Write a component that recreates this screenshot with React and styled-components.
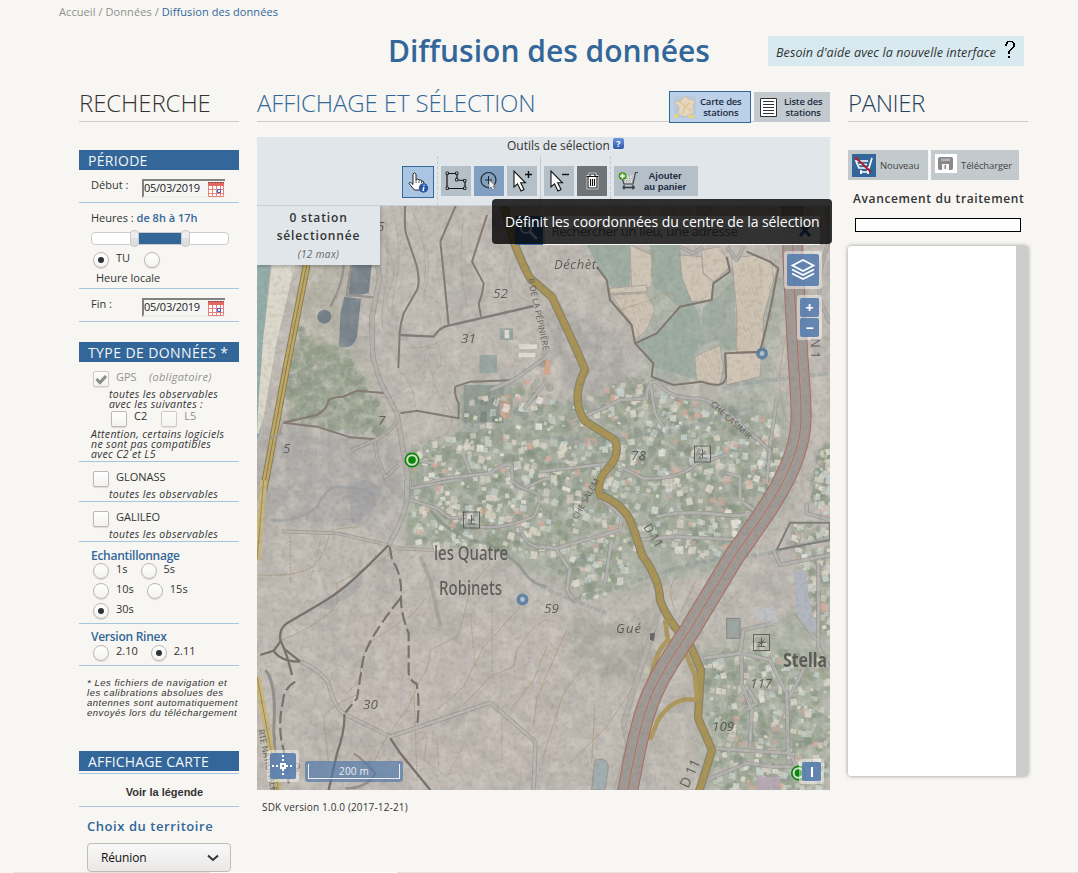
import React from 'react';
import styled, { createGlobalStyle, css } from 'styled-components';

const blue = '#336699';

const Global = createGlobalStyle`
  * { box-sizing: border-box; }
  body { margin: 0; background: #f7f6f2; font-family: "Open Sans", "Noto Sans", sans-serif; color: #333; overflow: hidden; }
  h1, h2, h3, p { margin: 0; font-weight: 400; }
  button { font-family: inherit; border: 0; padding: 0; margin: 0; }
`;

const Page = styled.div`width: 1078px; height: 873px; overflow: hidden; display: flex; flex-direction: column;`;
const Breadcrumb = styled.nav`
  height: 24px; padding: 4px 0 0 59px; font-size: 11px; line-height: 16px; color: #909090; white-space: pre; letter-spacing: .08px;
  b { font-weight: 400; color: ${blue}; }
`;
const TitleRow = styled.header`height: 61px; display: flex; padding-left: 388px; align-items: flex-start; flex: none;`;
const Title = styled.h1`width: 380px; font-size: 30px; line-height: 40px; padding-top: 7px; font-weight: 600; color: ${blue}; white-space: nowrap;`;
const Help = styled.div`
  width: 256px; height: 30px; margin-top: 12px; padding: 0 8px; background: #d8eaef; display: flex; align-items: center;
  justify-content: space-between; font-size: 12.5px; letter-spacing: .1px; font-style: italic; white-space: nowrap; padding-top: 2px;
  svg { margin-bottom: 4px; }
`;
const Columns = styled.main`display: grid; grid-template-columns: 160px 573px 180px; column-gap: 18px; padding-left: 79px; height: 788px; flex: none;`;
const Column = styled.section`display: flex; flex-direction: column; min-width: 0;`;
const Head = styled.div`height: 37px; border-bottom: 1px solid #ccc; display: flex; flex: none; align-items: flex-start; justify-content: space-between;`;
const Heading = styled.h2`font-size: 24px; line-height: 35px; font-weight: 300; white-space: nowrap; letter-spacing: ${p => p.$ls || 0}px; color: ${p => p.$c || '#333'};`;

/* search column */
const Bar = styled.h3`
  height: 20px; flex: none; margin-top: ${p => p.$mt}px; padding-left: 9px; background: ${blue}; color: #f4f6f8;
  font-size: 14px; line-height: 21px; letter-spacing: ${p => p.$ls || 0}px; white-space: nowrap;
`;
const Group = styled.div`
  height: ${p => p.$h}px; flex: none; border-bottom: 1px solid ${p => p.$line || '#a9c4de'}; padding: ${p => p.$pt || 0}px 0 0 12px;
  display: flex; flex-direction: column; font-size: 11px; white-space: nowrap;
`;
const Line = styled.div`display: flex; height: ${p => p.$h || 20}px; flex: none; line-height: ${p => p.$lh || 14}px; padding-left: ${p => p.$pl || 0}px; color: ${p => (p.$dim ? '#929292' : 'inherit')};`;
const Label = styled.span`margin-left: ${p => p.$ml || 0}px; width: ${p => (p.$w ? p.$w + 'px' : 'auto')}; font-style: ${p => (p.$i ? 'italic' : 'normal')}; letter-spacing: ${p => p.$ls || 0}px;`;
const Small = styled.p`font-size: 10.5px; line-height: 10px; margin-top: ${p => p.$mt ?? -1}px; font-style: italic; padding-left: ${p => p.$pl || 0}px; letter-spacing: ${p => p.$ls ?? 0.34}px;`;
const Sub = styled.h3`font-size: 12px; font-weight: 600; color: ${blue}; line-height: 14px; height: 14px; letter-spacing: ${p => p.$ls ?? -0.27}px;`;
const Hours = styled.span`font-weight: 600; color: ${blue};`;
const DateField = styled.div`
  width: 83px; height: 19px; display: flex; align-items: center; justify-content: space-between; border: 2px solid; border-color: #828282 transparent #eee #828282; border-right-width: 0;
  background: #f5f5f4; font-size: 11px; line-height: 14px; letter-spacing: -.25px; color: #222; margin-top: ${p => p.$mt || 0}px;
  span { padding-bottom: 1px; }
`;
const control = css`
  width: 16px; height: 16px; flex: none; border: 1px solid #bdb8b1; background: linear-gradient(#fff, #f3f2f1);
  box-shadow: 0 1px 1px rgba(0,0,0,.12); display: flex; align-items: center; justify-content: center; margin-left: ${p => p.$ml || 0}px; margin-top: ${p => p.$mt ?? 2}px;
`;
const Radio = styled.i`
  ${control} border-radius: 50%;
  &::after { content: ''; display: ${p => (p.$on ? 'block' : 'none')}; width: 6px; height: 6px; border-radius: 50%; background: #2e3436; }
`;
const Check = styled.i`${control} border-radius: 2px; opacity: ${p => (p.$off ? 0.7 : 1)};`;
const Slider = styled.div`
  width: 138px; height: 13px; margin: 7px 0 6px; flex: none; border: 1px solid #ccc; border-radius: 4px; background: #fff; display: flex; align-items: center; padding-left: 38px;
`;
const Range = styled.span`width: 42px; height: 11px; background: ${blue};`;
const Handle = styled.span`width: 9px; height: 17px; flex: none; border: 1px solid #c8c8c8; border-radius: 4px; background: linear-gradient(#ededed 50%, #dedede 50%);`;
const Note = styled.p`
  margin: 12px 0 0 8px; height: 40px; flex: none; font: italic 9.5px/10px "Liberation Sans", sans-serif; letter-spacing: .52px; white-space: nowrap;
`;
const Legend = styled.div`
  margin-top: 2px; height: 34px; flex: none; border: 1px solid #a9c4de; border-width: 1px 0; text-align: center;
  font: bold 11px/37px "Liberation Sans", sans-serif; padding-left: 11px; color: #333;
`;
const Territory = styled.h3`margin: 11px 0 8px 8px; font-size: 13px; line-height: 17px; height: 17px; font-weight: 600; color: ${blue}; letter-spacing: .56px; flex: none; white-space: nowrap;`;
const Select = styled.div`
  width: 144px; height: 29px; margin-left: 8px; flex: none; border: 1px solid #c0bdb9; border-radius: 4px; background: linear-gradient(#f9f8f8, #e9e8e7);
  display: flex; align-items: center; justify-content: space-between; padding: 0 11px 0 13px; font-size: 12px; letter-spacing: -.15px; color: #111;
`;
const Footer = styled.div`height: 1px; flex: none; margin-top: -1px; margin-left: 14px; border-left: 196px solid #e4e3dc; border-right: 681px solid #e4e3dc; background: #fff;`;

/* map column */
const MapColumn = styled(Column)`position: relative;`;
const Views = styled.div`display: flex; gap: 3px; margin-top: 6px;`;
const View = styled.button`
  width: ${p => p.$w}px; height: ${p => (p.$on ? 32 : 30)}px; margin-top: ${p => (p.$on ? 0 : 1)}px; display: flex; align-items: center; gap: ${p => p.$gap}px; padding-left: 4px;
  background: ${p => (p.$on ? '#bcd0e7' : '#c2cacf')}; border: ${p => (p.$on ? '1px solid #336699' : '0')}; font-size: 9.5px; line-height: 11px; font-weight: 600; color: #1c2c42; text-align: center; letter-spacing: -.2px;
`;
const Tools = styled.div`margin-top: 15px; height: 69px; flex: none; background: #e0e6e9; border-bottom: 1px solid #c9cfd5; display: flex; flex-direction: column;`;
const ToolsTitle = styled.div`height: 19px; padding: 0 0 0 250px; display: flex; gap: 3px; font-size: 12px; line-height: 17px; white-space: nowrap;`;
const Badge = styled.span`width: 11px; height: 11px; margin-top: 1px; background: linear-gradient(#6f96dc, #2c57ae); color: #fff; font-size: 9px; font-weight: 700; line-height: 11px; text-align: center; border-radius: 2px;`;
const ToolRow = styled.div`display: flex; height: 49px; padding-left: 145px; align-items: flex-start;`;
const Tool = styled.button`
  width: ${p => p.$w || 30}px; height: ${p => p.$h || 30}px; flex: none; margin: ${p => p.$mt ?? 10}px 0 0 ${p => p.$ml ?? 3}px; background: ${p => p.$bg || '#b4bfc8'};
  border: ${p => (p.$on ? '1px solid #336699' : '0')}; display: flex; align-items: center; justify-content: ${p => (p.$start ? 'flex-start' : 'center')}; gap: 5px; padding-left: ${p => (p.$start ? 4 : 0)}px;
  font: 700 9.5px/11px "Liberation Sans", sans-serif; color: #1c2c42; svg { flex: none; }
`;
const Divider = styled.i`width: 1px; height: 49px; margin-left: 3px; border-left: 1px ${p => p.$s || 'dashed'} #c6cbd0; flex: none;`;
const Map = styled.div`height: 584px; flex: none; position: relative; overflow: hidden; background: #b7b0a8;`;
const MapSvg = styled.svg`display: block; width: 573px; height: 584px;`;
const Count = styled.div`
  position: absolute; left: 0; top: 0; width: 123px; height: 59px; background: #e0e6e9; box-shadow: 1px 2px 3px rgba(0,0,0,.2); text-align: center; font-size: 12px; font-weight: 600;
  line-height: 18px; padding-top: 3px; letter-spacing: .85px;
  em { display: block; font-weight: 400; font-size: 10px; line-height: 18px; letter-spacing: .4px; color: #666; }
`;
const Search = styled.div`
  position: absolute; left: 258px; top: 10px; width: 305px; height: 29px; display: flex; align-items: center; background: rgba(255,255,255,.9); font-size: 13px; color: #777; justify-content: space-between; padding-right: 8px;
`;
const SearchIcon = styled.span`width: 30px; height: 29px; background: #3a6ea8; border-right: 2px solid #ddd; display: flex; align-items: center; justify-content: center;`;
const Widget = styled.div`
  position: absolute; left: ${p => p.$x}px; top: ${p => p.$y}px; padding: 3px; background: rgba(255,255,255,.45); border-radius: 3px; display: flex; flex-direction: column; gap: 1px;
`;
const Key = styled.span`width: ${p => p.$w}px; height: ${p => p.$h}px; display: flex; align-items: center; justify-content: center; border-radius: 2px; background: rgba(79,119,170,.85); color: #fff; font-size: 14px; font-weight: 700;`;
const Scale = styled.div`
  position: absolute; left: 48px; top: 555px; width: 98px; height: 21px; padding: 3px; border-radius: 3px; background: rgba(79,119,170,.67);
  span { display: block; height: 15px; border: 1px solid #eee; border-top: 0; text-align: center; color: #eee; font-size: 10px; line-height: 15px; letter-spacing: .2px; }
`;
const Tip = styled.div`
  position: absolute; z-index: 5; left: 235px; top: 114px; width: 340px; height: 45px; border-radius: 4px; background: rgba(0,0,0,.8); color: #fff; font-size: 14px; line-height: 45px; padding-left: 13px; letter-spacing: -.06px; white-space: nowrap;
`;
const Sdk = styled.p`padding: 9px 0 0 5px; font-size: 10px; line-height: 16px; letter-spacing: .15px;`;

/* basket column */
const Actions = styled.div`display: flex; gap: 3px; margin-top: 28px;`;
const Action = styled.button`width: ${p => p.$w}px; height: 30px; background: #c2cacd; display: flex; align-items: flex-start; gap: 4px; padding: 4px; font-size: 9.5px; letter-spacing: -.1px; line-height: 23px; color: #444; svg { flex: none; }`;
const Progress = styled.p`margin: 9px 0 0 5px; font-size: 12px; font-weight: 600; line-height: 20px; letter-spacing: .62px; white-space: nowrap;`;
const Track = styled.div`width: 166px; height: 14px; flex: none; margin: 9px 0 14px 7px; border: 1px solid #000; background: #fff;`;
const Basket = styled.div`height: 530px; flex: none; background: #fff; border-right: 12px solid #ccc; box-shadow: 0 0 4px rgba(0,0,0,.4); border-radius: 3px;`;

function rng(seed) {
  let s = seed;
  return () => { s = (s * 1664525 + 1013904223) % 4294967296; return s / 4294967296; };
}
function inside(x, y, poly) {
  let r = false;
  for (let i = 0, j = poly.length - 1; i < poly.length; j = i++) {
    const [a, b] = poly[i], [c, d] = poly[j];
    if (b > y !== d > y && x < ((c - a) * (y - b)) / (d - b) + a) r = !r;
  }
  return r;
}
const towns = [
  { n: 760, p: [[408, 452], [440, 436], [478, 432], [530, 418], [560, 402], [640, 375], [662, 390], [712, 405], [775, 418], [783, 470], [752, 538], [700, 558], [640, 545], [608, 592], [585, 600], [545, 560], [482, 546], [410, 544]] },
  { n: 210, p: [[702, 660], [760, 640], [828, 660], [830, 790], [712, 790], [715, 740], [705, 715]] },
  { n: 70, p: [[790, 525], [830, 520], [830, 640], [805, 610]] },
  { n: 60, p: [[818, 450], [830, 445], [830, 520], [812, 500]] },
  { n: 30, p: [[460, 395], [515, 390], [545, 350], [556, 420], [465, 426]] },
];
const rnd = rng(77);
const scatter = (n, p, f) => {
  const xs = p.map(q => q[0]), ys = p.map(q => q[1]);
  const x0 = Math.min(...xs), x1 = Math.max(...xs), y0 = Math.min(...ys), y1 = Math.max(...ys);
  const out = [];
  let k = 0;
  while (out.length < n && k++ < 20000) {
    const x = x0 + rnd() * (x1 - x0), y = y0 + rnd() * (y1 - y0);
    if (inside(x, y, p)) out.push(f(x, y, out.length));
  }
  return out;
};
const roofs = ['#e0dccd', '#e5e2d6', '#ced5ca', '#c6d4cd', '#dfd6c6', '#d6cfc0', '#d3a593', '#bdceca', '#e9e6dd'];
const greens = ['#75896f', '#84957b', '#828e76', '#6c8070', '#93a187'];
const trees = towns.flatMap((t, a) => scatter(Math.round(t.n * 2), t.p, (x, y, i) => <circle key={a + 't' + i} cx={x} cy={y} r={1.5 + rnd() * 3.5} fill={greens[(rnd() * 5) | 0]} opacity=".38" />));
const houses = towns.flatMap((t, a) => scatter(t.n, t.p, (x, y, i) => {
  const s = 2.4 + rnd() * 4.4;
  return <rect key={a + 'h' + i} x={x} y={y} width={s} height={s * (0.7 + rnd() * 0.6)} fill={roofs[(rnd() * 9) | 0]} opacity={0.55 + rnd() * 0.45} transform={`rotate(${rnd() * 40 - 15} ${x} ${y})`} />;
}));
const wood = scatter(480, [[300, 320], [318, 345], [345, 345], [370, 390], [390, 435], [350, 435], [290, 420], [283, 395]], (x, y, i) => <circle key={i} cx={x} cy={y} r={1 + rnd() * 4} fill={greens[(rnd() * 5) | 0]} opacity=".33" />);

const Road = ({ d, w = 8, c = '#b1b0ac', e = '#83827f' }) => (
  <g fill="none" strokeLinejoin="round"><path d={d} stroke={e} strokeWidth={w + 4} opacity=".75" /><path d={d} stroke={c} strokeWidth={w} /></g>
);
const Pin = ({ x, y }) => <g><circle cx={x} cy={y} r="6.7" fill="#d4ddcc" stroke="#0a870a" strokeWidth="1.7" /><circle cx={x} cy={y} r="3.8" fill="#078607" /></g>;
const Dot = ({ x, y }) => <circle cx={x} cy={y} r="4.2" fill="#b4c3cf" stroke="#557aa0" strokeWidth="3.6" opacity=".85" />;
const Site = ({ x, y }) => <g stroke="#555" fill="none" opacity=".85"><rect x={x - 8} y={y - 8} width="16" height="16" /><path d={`M${x - 4} ${y + 4}H${x + 4}M${x} ${y - 5}V${y + 4}M${x - 4} ${y}H${x + 4}M${x - 3} ${y + 3}l6-6`} /></g>;

const motorway = 'M792 200 L793 260 L797 340 C800 400 805 420 796 450 C786 485 760 520 735 555 L690 630 C650 690 644 700 627 795';
const departmental = 'M504 206Q512 245 530 278L552 297L565 325Q577 350 585 370Q570 400 585 421L615 440Q620 452 611 465Q595 480 600 495Q627 505 634 530L642 555Q660 580 660 600Q667 620 690 645L701 670L698 718L712 750L698 795';

function Terrain() {
  return (
    <MapSvg viewBox="257 206 573 584">
      <defs>
        <filter id="coarse" x="0" y="0" width="100%" height="100%" colorInterpolationFilters="sRGB"><feTurbulence type="fractalNoise" baseFrequency=".025" numOctaves="4" seed="4" /><feColorMatrix values="0 0 0 0 .55  0 0 0 0 .56  0 0 0 0 .55  1.6 0 0 0 -.68" /></filter>
        <filter id="fine" x="0" y="0" width="100%" height="100%" colorInterpolationFilters="sRGB"><feTurbulence type="fractalNoise" baseFrequency=".22" numOctaves="3" seed="9" /><feColorMatrix values="0 0 0 0 .4  0 0 0 0 .4  0 0 0 0 .38  0 1.3 0 0 -.58" /></filter>
        <filter id="light" x="0" y="0" width="100%" height="100%" colorInterpolationFilters="sRGB"><feTurbulence type="fractalNoise" baseFrequency=".08" numOctaves="5" seed="21" /><feColorMatrix values="0 0 0 0 .87  0 0 0 0 .86  0 0 0 0 .82  0 0 1.6 0 -.65" /></filter>
        <filter id="soft"><feGaussianBlur stdDeviation="5" /></filter>
        <pattern id="rows" width="4" height="4" patternUnits="userSpaceOnUse" patternTransform="rotate(8)"><path d="M1 0V4" stroke="#b3a690" strokeWidth=".6" /></pattern>
      </defs>
      <rect x="257" y="206" width="573" height="584" fill="#bcb6af" />
      <g filter="url(#soft)">
        <path d="M257 425L400 440L405 500L370 530L257 520Z" fill="#aaa7a5" />
        <path d="M405 450L560 400L790 395L790 500L720 570L600 600L480 550L405 545Z" fill="#a2aa9c" />
        <path d="M700 650L830 600V790H700Z" fill="#a6ae9f" />
        <path d="M545 300L620 335L640 390L570 410Z" fill="#a9a6a2" />
        <path d="M285 350L360 350L390 435L290 420Z" fill="#adb19f" />
        <path d="M460 385L520 380L520 425L460 430Z" fill="#99a69c" />
        <path d="M300 260H345V350H300Z" fill="#b3b1a2" />
        <path d="M640 250L790 280L770 395L640 380Z" fill="#a8b1a5" />
        <path d="M560 620L620 620L660 600L650 680L590 680Z" fill="#abaa9f" />
        <path d="M350 600L560 620L560 780L330 760Z" fill="#bfb5af" />
      </g>
      <rect x="257" y="206" width="573" height="584" filter="url(#coarse)" opacity=".5" />
      <rect x="257" y="206" width="573" height="584" filter="url(#light)" opacity=".45" />
      <g transform="translate(257 200) scale(.33333)">
        <path d="M0 15H60L30 300L10 700L0 720Z" fill="#86a6a3" />
        <path d="M45 190L115 190L60 420L20 650L5 700L0 700L5 600L18 420Z" fill="#dfdbcd" />
        <path d="M280 190H345L335 280L275 290ZM262 290L312 296L300 410Q290 450 246 440L250 340Z" fill="#66747f" />
        <circle cx="202" cy="350" r="21" fill="#60707c" />
        <path d="M728 385H768V420H728Z M668 465H720V520H668Z" fill="#8c9d99" />
        <path d="M620 555H740V670H620Z" fill="#84918a" />
        <g fill="#69756f"><path d="M670 595H690V615H670ZM705 595H720V615H705ZM670 635H690V665H670ZM705 635H720V665H705Z" /></g>
        <path d="M730 585H760V655H730Z M860 480H880V525H860Z" fill="#d39d82" />
        <g stroke="#e3e0d7" strokeWidth="14"><path d="M750 390V415M785 440H840M785 465H835M775 590H790" /></g>
      </g>
      <g transform="translate(540 200) scale(.33333)">
        <path d="M140 135H270L270 260L215 260L180 210ZM330 135H420L430 230L470 330L490 400L460 470L470 540L340 500L290 425L350 400L420 320L340 260Z" fill="#92a599" />
        <path d="M580 240L590 450L555 450L535 420L480 440L490 320L530 290Z" fill="#97a599" />
        <g fill="#d0c4b3" stroke="#918b82" strokeWidth="2">
          <path d="M270 135L335 165L335 260L275 270Z" /><path d="M420 165L485 170L490 220L520 245L515 300L455 305L425 230Z" /><path d="M485 150L540 140L570 200L520 245L490 220Z" />
          <path d="M575 175L650 165L700 195L710 210L670 350L670 455L590 455L590 330Z" /><path d="M560 460L665 460L660 530L560 555Z" /><path d="M465 470L540 435L550 500L540 555L470 540Z" />
          <path d="M215 285L320 280L345 330L320 390L285 420L275 375Z" /><path d="M210 265L320 255L320 275L210 280Z" />
        </g>
        <path d="M215 285L320 280L345 330L285 420ZM465 470L540 435L540 555L470 540ZM590 200H670V455H590Z" fill="url(#rows)" />
      </g>
      {wood}{trees}{houses}
      <rect x="257" y="206" width="573" height="584" filter="url(#light)" opacity=".25" />

      <g transform="translate(257 200) scale(.33333)" fill="none">
        <g stroke="#a59b80" strokeWidth="3" opacity=".6">
          <path d="M500 450Q560 420 550 500Q500 520 560 600T540 720M760 200Q740 280 830 310M420 510Q470 540 475 620M530 330Q570 350 540 400M380 130Q430 200 400 260T420 350" />
        </g>
        <g stroke="#a29890" strokeWidth="3" opacity=".6">
          <path d="M385 60Q400 180 380 300T410 400M410 50Q440 150 415 260T430 350M470 40Q520 150 500 260M500 130Q530 180 500 290M620 50Q600 190 630 320M520 450Q500 500 550 560M440 440Q500 450 540 430" />
        </g>
        <g stroke="#776b63" strokeWidth="6">
          <path d="M445 15Q440 90 450 110L480 200Q490 250 480 270L440 340Q430 370 428 400L424 505" /><path d="M597 15L550 125L563 250L575 377" /><path d="M690 45L645 185L680 250Q675 290 665 310L672 350" />
          <path d="M78 668L180 645Q210 630 215 600Q230 590 260 590L300 572L390 580" /><path d="M80 668L180 680L280 712L355 718" /><path d="M430 640L480 632L605 655L605 610Q590 580 595 560L640 545L770 540" />
        </g>
        <path d="M430 405L530 410Q550 380 575 377L830 318" stroke="#706d6a" strokeWidth="7" />
        <g stroke="#8f8a84" strokeWidth="7"><path d="M260 190Q260 250 220 320M285 190Q275 230 270 285L350 292" /></g>
        <Road d="M362 195L368 235L345 350Q345 460 350 480L370 545L420 640L440 760L460 870" w={12} c="#b1aca6" />
        <Road d="M420 660Q410 690 355 720L285 750M352 720L360 770L385 832L425 795" w={7} c="#b1aca6" />
        <Road d="M700 570L770 540L870 470M870 540L800 628" w={9} />
        <path d="M150 190L85 520L20 870" stroke="#7c6d40" strokeWidth="23" /><path d="M150 190L85 520L20 870" stroke="#bda353" strokeWidth="17" /><path d="M150 190L85 520L20 870" stroke="#806c36" strokeWidth="3" />
        <path d="M75 668L70 700L42 715" stroke="#99948d" strokeWidth="6" />
        <Road d="M460 865L560 835L700 820Q750 780 765 800Q760 860 800 865L870 835M620 765L640 820M480 780L530 790" w={8} />
      </g>
      <g transform="translate(257 480) scale(.33333)" fill="none">
        <g stroke="#a08f68" strokeWidth="3" opacity=".65">
          <path d="M0 285Q100 290 150 270T220 150L300 140" /><path d="M75 480Q200 430 240 370V310L380 235L430 200M270 640Q320 590 310 570Q320 500 350 480L470 400L510 350M200 710Q230 670 310 640M200 710L215 850" />
          <path d="M350 850Q380 770 450 690L490 600Q520 560 520 510L600 470Q620 420 640 320L700 250" /><path d="M540 690L620 620L680 500L790 380M615 680L700 590L770 560L780 510Q840 420 870 420M760 690L830 600L870 500M830 740L840 650L870 600" />
          <path d="M510 770L500 840L570 890L620 800M100 170V310M190 185L160 300M640 400L655 560M705 380V600M540 770L545 860M470 600L480 900M735 700V850" strokeDasharray="8 3" />
        </g>
        <path d="M490 230L520 300L550 440" stroke="#828476" strokeWidth="12" opacity=".45" />
        <path d="M40 120Q120 130 180 80Q210 20 240 20L330 30L350 50" stroke="#8c9297" strokeWidth="8" opacity=".6" />
        <path d="M270 20Q330 -20 360 20T310 120Q280 150 280 90ZM190 380Q240 330 310 290Q330 330 240 370Q220 400 190 380Z" fill="#8d8f95" opacity=".4" />
        <Road d="M450 0V55Q440 120 395 195" w={12} /><Road d="M75 154L240 160L395 195M420 205L530 210" w={7} c="#b8b1aa" />
        <path d="M395 195L330 260Q260 330 200 365L90 430Q65 445 70 485L50 512L10 525M50 512Q70 545 130 545L80 505M70 480Q90 520 105 585" stroke="#685f5b" strokeWidth="7" />
        <path d="M398 200L405 240Q435 280 432 345Q430 400 455 460V580Q460 605 478 610Q490 660 480 740M430 355Q330 480 318 540L300 655L262 702M115 605Q80 625 78 665Q60 740 80 810L95 910" stroke="#685f5b" strokeWidth="6.500" strokeDasharray="38 13" />
        <Road d="M130 545Q190 570 215 610Q230 680 262 702L400 770L700 668L835 785L830 930" w={9} c="#b8b3ac" /><path d="M262 702Q265 750 240 820L215 930M400 775L430 820L520 930" stroke="#685f5b" strokeWidth="7" />
        <path d="M265 925Q330 925 355 880Q320 840 290 820" stroke="#777068" strokeWidth="7" opacity=".7" />
        <Road d="M460 25L600 0M460 60L540 85L580 115L630 110M655 140Q740 150 830 110Q860 60 840 40Q780 20 760 0M790 140Q800 200 860 205" w={7} />
        <path d="M520 90Q590 180 690 190Q780 240 800 275T870 320" stroke="#697a75" strokeWidth="9" opacity=".5" />
        <path d="M25 570Q60 610 50 750Q60 880 50 930" stroke="#86867f" strokeWidth="9" /><path d="M20 0L0 240M0 590L65 930" stroke="#c9b269" strokeWidth="19" /><path d="M20 0L0 240M0 590L65 930" stroke="#8f7d4c" strokeWidth="3" />
      </g>
      <g transform="translate(540 200) scale(.33333)" fill="none">
        <g stroke="#a09b79" strokeWidth="3" opacity=".65"><path d="M340 150Q340 240 380 280T440 380M230 330Q350 300 360 280L440 290M360 500Q340 460 380 440M190 135Q240 180 230 230M680 120Q720 260 690 370Q650 440 700 520M740 400Q690 600 760 690" /></g>
        <g stroke="#70675f" strokeWidth="6"><path d="M170 200L200 240L210 300L275 375L285 430L340 490L335 530L400 555L485 545Q555 570 558 530L555 460L660 455Q690 340 700 280L715 205L690 185L620 155M285 430L350 400L420 320L515 300L520 250L570 215L560 170" /></g>
        <path d="M0 710L180 730L450 680L640 620M570 555L870 520" stroke="#7f8e93" strokeWidth="12" opacity=".4" strokeDasharray="30 8" />
        <Road d="M320 600Q320 540 350 545Q390 600 480 595Q540 610 620 690L690 750L680 850M330 545L345 640L370 680M90 665L180 630L240 600L320 595M0 815L215 790M240 800L310 835Q420 840 470 790L560 765M560 820L600 830L605 870M710 600L690 740M420 140L460 160L490 140M560 140L590 180L610 140M860 20L870 120Q830 210 840 300L870 370" w={8} />
      </g>
      <g transform="translate(540 480) scale(.33333)" fill="none">
        <Road d="M350 110Q440 90 550 105Q620 110 655 95L770 0M300 180L400 170L620 180Q660 150 655 100L600 60V0M0 200L50 205L240 150L245 110L190 60M50 210L90 270L80 330L105 365M195 310L215 180M700 210L720 255L870 225M835 250V500L870 570M490 535L600 520L610 450L700 430M605 525V610L635 690L630 800M600 650L620 620L650 670L620 690M605 520L690 540L740 640L745 820M750 650L790 570M520 805L750 820L770 860H700L620 850L500 900L480 930M770 400L830 480M800 70V100L870 120" w={9} />
        <path d="M0 320L100 360L200 400M100 360Q250 320 330 290T520 240L690 220L870 170" stroke="#7b8c8c" strokeWidth="11" strokeDasharray="20 5" opacity=".38" />
        <path d="M710 210L750 128H870V180L710 210" stroke="#6e706c" strokeWidth="6" />
        <g stroke="#aa8e67" strokeWidth="3" opacity=".7"><path d="M130 560L70 640L10 830M280 620L200 740L90 850M165 670L155 850M0 630L80 450M470 300L420 400M410 290Q380 320 400 380M560 270Q500 320 550 380L600 330" /></g>
        <path d="M760 270H800L805 350L830 440L820 460L770 400Z" fill="#adb4be" /><path d="M640 390L700 380L715 430L650 420Z" fill="#bcc0c6" /><path d="M560 415H600V475H560Z" fill="#95a09c" stroke="#777" strokeWidth="3" /><path d="M155 930L165 840Q200 830 205 860L195 930Z" fill="#98aaad" stroke="#99948a" strokeWidth="4" /><path d="M650 890H720V930H650Z" fill="#b1a3b1" />
        <Road d="M355 400L310 540L250 730L265 800L230 930" w={14} c="#b0aca6" e="#93908b" />
        <path d="M330 460L345 458L342 483L330 480Z" fill="#555" />
      </g>
      <g fill="none" strokeLinejoin="round">
        <path d={departmental} stroke="#7d7659" strokeWidth="8.500" />
        <path d={departmental} stroke="#a2893f" strokeWidth="6" />
        <path d="M665 620L668 640Q652 655 650 690L645 715M668 640L684 650L695 675L697 700Q674 695 658 720L650 740" stroke="#a89049" strokeWidth="4.500" />
      </g>
      <g fill="none"><path d={motorway} stroke="#7c6964" strokeWidth="21" /><path d={motorway} stroke="#b48375" strokeWidth="19" /><path d={motorway} stroke="#92928f" strokeWidth="15.500" /><path d={motorway} stroke="#b48a7e" strokeWidth="4" /><path d={motorway} stroke="#73726f" strokeWidth="1" /></g>
      <rect x="257" y="206" width="573" height="584" filter="url(#fine)" opacity=".38" />
      <rect x="257" y="206" width="573" height="584" fill="#cecbc4" opacity=".17" />

      <g fontFamily="Open Sans, sans-serif" fontStyle="italic" fontSize="13.5" fill="#4f4e4a" fontWeight="500" opacity=".85">
        <text x="493" y="298">52</text><text x="461" y="343">31</text><text x="378" y="425">7</text><text x="283" y="453">5</text><text x="377" y="231">5</text>
        <text x="631" y="460">78</text><text x="544" y="613">59</text><text x="363" y="709">30</text><text x="712" y="731">109</text><text x="750" y="688">117</text><text x="285" y="772">19</text>
        <text x="554" y="269" fontWeight="400" fontSize="13" textLength="46">Déchèt.</text><text x="616" y="633" fontWeight="400" fontSize="13" textLength="25">Gué</text>
      </g>
      <g fontFamily="Noto Sans, Open Sans, sans-serif" fontSize="19" fill="#4c4a47" fontWeight="500" opacity=".82">
        <text x="434" y="560" textLength="74" lengthAdjust="spacingAndGlyphs">les Quatre</text><text x="439" y="595" textLength="63" lengthAdjust="spacingAndGlyphs">Robinets</text>
        <text x="783" y="667" fontWeight="700" textLength="44" lengthAdjust="spacingAndGlyphs">Stella</text>
      </g>
      <g fontFamily="Open Sans, sans-serif" fill="#62615b" fontSize="8.5">
        <text transform="translate(528 279) rotate(78)">R DE LA PÉPINIÈRE</text><text transform="translate(710 405) rotate(42)">CHE CASIMIR</text><text transform="translate(577 520) rotate(-60)">CHE SALEM</text>
        <text transform="translate(258 730) rotate(78)">RTE NATIONALE</text><text transform="translate(811 338) rotate(90)" fontSize="13">N 1</text><text transform="translate(643 527) rotate(58)" fontSize="12">D 11</text><text transform="translate(688 789) rotate(-65)" fontSize="14">D 11</text>
      </g>
      <Site x={702.5} y={454} /><Site x={471.5} y={520} /><Site x={761.5} y={642.5} />
      <Dot x={762} y={353.5} /><Dot x={522.5} y={599.5} /><Pin x={412} y={460} /><Pin x={798.5} y={773} />
    </MapSvg>
  );
}

const Calendar = () => (
  <svg width="17" height="16" viewBox="0 0 17 16"><path d="M0 1H16V16H0Z" fill="#fff" /><path d="M0 1H16V5H0Z" fill="#e06a62" /><path d="M0 1.5H16" stroke="#703c38" strokeDasharray="1.5 1.5" /><path d="M.5 5V15.5H15.5V5M4.500 5V15M8.500 5V15M12.500 5V15M1 8.5H15M1 12.500H15" fill="none" stroke="#e5807a" /><path d="M9.5 8.5h3v3h-3z" fill="#fff" stroke="#3362d6" /></svg>
);
const Arrow = ({ sign }) => (
  <svg width="26" height="26" viewBox="0 0 26 26"><path d="M5 3V19L8.5 15.8L12 23L15 21.5L11.7 14.8H16.5Z" fill="#fff" stroke="#111" strokeWidth="1.1" /><path d={sign === '+' ? 'M16 6.500H23M19.500 3V10' : 'M16 6.500H23'} stroke="#111" strokeWidth="1.4" /></svg>
);
const Cart = () => (
  <svg width="21" height="20" viewBox="0 0 21 20"><path d="M6 6L17 4L15 12H6Z" fill="#d6dadb" /><path d="M20 1.500H17.500L15 13H6L4 7" fill="none" stroke="#444" strokeWidth="1.2" /><path d="M7 7.500H16M6 10H15.500M8.500 5V12M11.500 5V12M14.500 5V12" stroke="#888" strokeWidth=".6" strokeDasharray="1 1" /><path d="M4.500 16.500H17M6 14V18.500M15 14V18.500" stroke="#333" strokeWidth="1.300" fill="none" /><circle cx="4.500" cy="5" r="4" fill="#4b9b2c" /><path d="M2 5H7M4.500 2.500V7.500" stroke="#fff" strokeWidth="1.500" /></svg>
);

export default function App() {
  return (
    <Page>
      <Global />
      <Breadcrumb>Accueil / Données / <b>Diffusion des données</b></Breadcrumb>
      <TitleRow>
        <Title>Diffusion des données</Title>
        <Help>Besoin d'aide avec la nouvelle interface
          <svg width="12" height="18" viewBox="0 0 12 18" shapeRendering="crispEdges"><path d="M1 3H3V5H1ZM2 1H4V3H2ZM3 0H9V1H3ZM8 1H10V2H8ZM9 2H11V6H9ZM8 6H10V7H8ZM7 7H9V8H7ZM6 8H8V9H6ZM5 9H7V10H5ZM4 10H6V13H4ZM4 15H6V17H4Z" fill="#000" /></svg>
        </Help>
      </TitleRow>
      <Columns>
        <Column>
          <Head><Heading $ls={-0.1}>RECHERCHE</Heading></Head>
          <Bar $mt={28} $ls={0.3}>PÉRIODE</Bar>
          <Group $h={33} $pt={9}><Line $lh={12}><Label $w={51}>Début :</Label><DateField><span>05/03/2019</span><Calendar /></DateField></Line></Group>
          <Group $h={86} $pt={8}>
            <Line $h={14}><Label>Heures :&nbsp;</Label><Hours>de 8h à 17h</Hours></Line>
            <Slider><Handle /><Range /><Handle /></Slider>
            <Line $h={20}><Radio $on $ml={2} $mt={1} /><Label $ml={7}>TU</Label><Radio $ml={14} $mt={1} /></Line>
            <Line $h={14} $pl={5}>Heure locale</Line>
          </Group>
          <Group $h={33} $pt={8}><Line><Label $w={51}>Fin :</Label><DateField $mt={1}><span>05/03/2019</span><Calendar /></DateField></Line></Group>
          <Bar $mt={20} $ls={0.4}>TYPE DE DONNÉES *</Bar>
          <Group $h={100} $pt={8}>
            <Line $h={20} $dim><Check $ml={2} $mt={1} $off><svg width="12" height="11" viewBox="0 0 12 11"><path d="M1.500 5L5 8.500L11 2" fill="none" stroke="#59635f" strokeWidth="3" /></svg></Check><Label $ml={7} $w={33}>GPS</Label><Label $i $ls={0.3}>(obligatoire)</Label></Line>
            <Small $pl={18}>toutes les observables<br />avec les suivantes :</Small>
            <Line $h={20} $pl={18}><Check $ml={2} $mt={2} /><Label $ml={7}>C2</Label><Check $ml={14} $mt={2} $off /><Line as="span" $dim><Label $ml={7}>L5</Label></Line></Line>
            <Small $mt={0}>Attention, certains logiciels<br />ne sont pas compatibles<br />avec C2 et L5</Small>
          </Group>
          <Group $h={40} $pt={8}><Line><Check $ml={2} $mt={1} /><Label $ml={7}>GLONASS</Label></Line><Small $pl={18}>toutes les observables</Small></Group>
          <Group $h={40} $pt={8}><Line><Check $ml={2} $mt={1} /><Label $ml={7}>GALILEO</Label></Line><Small $pl={18}>toutes les observables</Small></Group>
          <Group $h={82} $pt={7}>
            <Sub>Echantillonnage</Sub>
            <Line $lh={12}><Radio $ml={2} $mt={0} /><Label $ml={7}>1s</Label><Radio $ml={13} $mt={0} /><Label $ml={7}>5s</Label></Line>
            <Line $lh={12}><Radio $ml={2} $mt={0} /><Label $ml={7}>10s</Label><Radio $ml={13} $mt={0} /><Label $ml={7}>15s</Label></Line>
            <Line $lh={12}><Radio $on $ml={2} $mt={0} /><Label $ml={7}>30s</Label></Line>
          </Group>
          <Group $h={42} $pt={6}>
            <Sub>Version Rinex</Sub>
            <Line><Radio $ml={2} $mt={1} /><Label $ml={7}>2.10</Label><Radio $on $ml={13} $mt={1} /><Label $ml={7}>2.11</Label></Line>
          </Group>
          <Note>* Les fichiers de navigation et<br />les calibrations absolues des<br />antennes sont automatiquement<br />envoyés lors du téléchargement</Note>
          <Bar $mt={33} $ls={0.15}>AFFICHAGE CARTE</Bar>
          <Legend>Voir la légende</Legend>
          <Territory>Choix du territoire</Territory>
          <Select>Réunion<svg width="12" height="8" viewBox="0 0 12 8"><path d="M1 1.500L6 6L11 1.500" fill="none" stroke="#333" strokeWidth="2" /></svg></Select>
        </Column>

        <MapColumn>
          <Head>
            <Heading $c={blue} $ls={-0.12}>AFFICHAGE ET SÉLECTION</Heading>
            <Views>
              <View $on $w={82} $gap={4}>
                <svg width="22" height="22" viewBox="0 0 22 22"><rect width="22" height="22" fill="#b9cadb" /><path d="M10 0L15 3L21 5L19 10L20 17L15 19L11 21L4 18L5 11L0 6L7 5Z" fill="#e4d5bd" stroke="#c9a99b" strokeWidth=".5" /><path d="M5 5L11 10L16 7M11 10L9 18M11 10L18 15" stroke="#d9b65f" strokeWidth=".7" fill="none" /><path d="M0 18H4V22H0ZM14 19H21V22H14Z" fill="#e2d58a" /></svg>
                <span>Carte des<br />stations</span>
              </View>
              <View $w={76} $gap={5}>
                <svg width="21" height="21" viewBox="0 0 21 21"><path d="M2.500 1.500H18.500V19.500H2.500Z" fill="#fff" stroke="#333" /><path d="M5 4.500H16M5 7.500H16M5 10.500H16M5 13.500H16M5 16.500H16" stroke="#333" /></svg>
                <span>Liste des<br />stations</span>
              </View>
            </Views>
          </Head>
          <Tools>
            <ToolsTitle>Outils de sélection<Badge>?</Badge></ToolsTitle>
            <ToolRow>
              <Tool $w={32} $h={32} $ml={0} $on $bg="#aac5e2"><svg width="26" height="26" viewBox="0 0 26 26"><path d="M8 14.500V5Q9.500 2.500 11 5V11Q13 9 14 11Q16 10 16.500 12Q18.800 11.500 19 14V17L17 21H9.500L4 14.500Q4.500 12 8 15.500Z" fill="#fff" stroke="#222" /><path d="M11 11V14M14 11.500V14M16.500 12V14" stroke="#333" strokeWidth=".8" /><circle cx="18.500" cy="19" r="4.700" fill="#2757a5" /><path d="M19.100 15.800V16.800M18.900 18L18 22" stroke="#fff" strokeWidth="1.500" /></svg></Tool>
              <Divider />
              <Tool><svg width="22" height="20" viewBox="0 0 22 20"><path d="M2 2.500H12V9L20 9.500V17.500H2Z" fill="none" stroke="#111" strokeWidth="1.200" /><path d="M1 1H3.500V3.500H1ZM10.500 1H13V3.500H10.500ZM10.500 7.500H13V10H10.500ZM18.500 8.500H21V11H18.500ZM18.500 16H21V18.500H18.500ZM1 16H3.500V18.500H1Z" fill="#b4bfc8" stroke="#111" strokeWidth=".8" /></svg></Tool>
              <Tool $bg="#819fc0"><svg width="24" height="24" viewBox="0 0 24 24"><circle cx="11.500" cy="11" r="7.500" fill="none" stroke="#222" strokeWidth="1.100" /><path d="M8 11H15M11.500 7V15" stroke="#222" /><path d="M12 11V20L14 18L16 21L17.500 20L16 17H18.500Z" fill="#eee" stroke="#555" strokeWidth=".5" /></svg></Tool>
              <Tool><Arrow sign="+" /></Tool><Divider $s="solid" />
              <Tool><Arrow sign="-" /></Tool>
              <Tool $bg="#6f7478"><svg width="15" height="18" viewBox="0 0 15 18"><path d="M1.500 4.500H13.500M5 4V2H10V4M3 5V16H12V5" fill="none" stroke="#fff" strokeWidth="2.600" /><path d="M3 5H12V16H3Z" fill="#fff" /><path d="M1.500 4.500H13.500M5 4V2H10V4M3 5V16H12V5M5.500 7V14M7.500 7V14M9.500 7V14" fill="none" stroke="#111" strokeWidth="1.100" /></svg></Tool><Divider />
              <Tool $w={84} $start><Cart /><span>Ajouter<br />au panier</span></Tool>
            </ToolRow>
          </Tools>
          <Map>
            <Terrain />
            <Count>0 station<br />sélectionnée<em>(12 max)</em></Count>
            <Search><SearchIcon><svg width="20" height="20" viewBox="0 0 20 20"><circle cx="7" cy="7" r="5" fill="none" stroke="#fff" strokeWidth="2" /><path d="M11 11L18 18" stroke="#fff" strokeWidth="2.500" /></svg></SearchIcon><Label $w={240} $ls={-0.27}>Rechercher un lieu, une adresse</Label><svg width="14" height="13" viewBox="0 0 14 13"><path d="M2 1L12 12M12 1L2 12" stroke="#36669e" strokeWidth="3" /></svg></Search>
            <Widget $x={527} $y={45}><Key $w={32} $h={32}><svg width="26" height="24" viewBox="0 0 26 24"><path d="M13 2L23.500 7.500L13 13L2.500 7.500ZM2 11.500L13 17L24 11.500M2 15.500L13 21L24 15.500" fill="none" stroke="#fff" strokeWidth="1.800" /></svg></Key></Widget>
            <Widget $x={540} $y={89}><Key $w={19} $h={19}>+</Key><Key $w={19} $h={19}>−</Key></Widget>
            <Widget $x={10} $y={544}><Key $w={26} $h={26}><svg width="24" height="24" viewBox="0 0 24 24" shapeRendering="crispEdges"><path d="M12 1V9M12 15V23M1 12H9M15 12H23" stroke="#fff" strokeWidth="2" strokeDasharray="2 2" /><path d="M10 10H14V14H10Z" fill="none" stroke="#fff" strokeWidth="2" /></svg></Key></Widget>
            <Widget $x={542} $y={553}><Key $w={19} $h={19}><svg width="4" height="12"><path d="M2 1V11" stroke="#fff" strokeWidth="2" /></svg></Key></Widget>
            <Scale><span>200 m</span></Scale>
          </Map>
          <Tip>Définit les coordonnées du centre de la sélection</Tip>
          <Sdk>SDK version 1.0.0 (2017-12-21)</Sdk>
        </MapColumn>

        <Column>
          <Head><Heading $c="#264060" $ls={-0.4}>PANIER</Heading></Head>
          <Actions>
            <Action $w={80}><svg width="24" height="23" viewBox="0 0 24 23"><rect width="24" height="23" fill={blue} /><path d="M20 4L17 14H7L4 7H16M7 10.500H15M8 18H17M9 16V20M16 16V20" fill="none" stroke="#fff" strokeWidth="1.700" /><path d="M3 3L19 18" stroke="#b11e28" strokeWidth="2" /></svg>Nouveau</Action>
            <Action $w={88}><svg width="22" height="19" viewBox="0 0 22 19"><rect width="22" height="19" fill="#fff" /><rect x="3" y="3" width="15" height="13" rx="2" fill="#888" /><path d="M6 4.500H15V7H6Z" fill="#b5b5b5" /><path d="M7 10H14V16H7Z" fill="#f5f5f5" /><path d="M9.500 11H11V15H9.500Z" fill="#888" /></svg>Télécharger</Action>
          </Actions>
          <Progress>Avancement du traitement</Progress>
          <Track />
          <Basket />
        </Column>
      </Columns>
      <Footer />
    </Page>
  );
}
